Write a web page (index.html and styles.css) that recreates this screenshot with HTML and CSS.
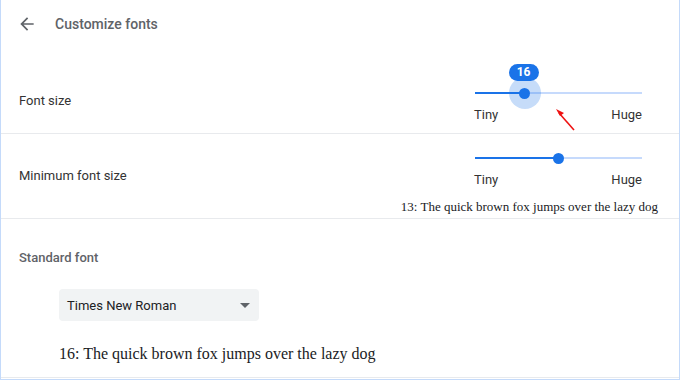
FILE: index.html
```html
<!DOCTYPE html>
<html>
<head>
<meta charset="utf-8">
<link rel="stylesheet" href="styles.css">
</head>
<body>
<div class="frame">
  <header class="header">
    <svg class="back" viewBox="0 0 24 24" width="20" height="20"><path d="M20 11H7.83l5.59-5.59L12 4l-8 8 8 8 1.41-1.41L7.83 13H20v-2z" fill="#5f6368"/></svg>
    <span class="title">Customize fonts</span>
  </header>

  <div class="row row-size">
    <div class="label label-size">Font size</div>
    <div class="control">
      <div class="slider-block">
        <div class="slider">
          <div class="track"></div>
          <div class="track-active" style="width:29%"></div>
          <div class="halo" style="left:28.9%"></div>
          <div class="knob" style="left:28.9%"></div>
          <div class="badge" style="left:28.9%">16</div>
        </div>
        <div class="ends"><span>Tiny</span><span>Huge</span></div>
      </div>
    </div>
  </div>

  <div class="row row-min">
    <div class="label label-min">Minimum font size</div>
    <div class="control">
      <div class="slider-block">
        <div class="slider">
          <div class="track"></div>
          <div class="track-active" style="width:50%"></div>
          <div class="knob" style="left:49.7%"></div>
        </div>
        <div class="ends"><span>Tiny</span><span>Huge</span></div>
      </div>
      <div class="sample-small">13: The quick brown fox jumps over the lazy dog</div>
    </div>
  </div>

  <section class="standard">
    <div class="section-title">Standard font</div>
    <div class="select">
      <span>Times New Roman</span>
      <span class="caret"></span>
    </div>
    <div class="sample-large">16: The quick brown fox jumps over the lazy dog</div>
  </section>

  <svg class="annot" width="30" height="30" viewBox="0 0 30 30">
    <line x1="23" y1="26" x2="8" y2="9" stroke="#ee1111" stroke-width="1.6"/>
    <polygon points="5,5 13,9 9,12" fill="#ee1111"/>
  </svg>
</div>
</body>
</html>
```

FILE: styles.css
```css
* { box-sizing: border-box; }
html, body { margin: 0; padding: 0; background: #fff; }
body { font-family: Roboto, "Liberation Sans", sans-serif; font-size: 13px; color: #333; }

.frame {
  position: relative;
  width: 680px;
  height: 380px;
  border-left: 1px solid #c4dafa;
  border-right: 1px solid #c4dafa;
  border-bottom: 1px solid #c4dafa;
  overflow: hidden;
}

.header {
  height: 48px;
  display: flex;
  align-items: center;
  padding-left: 16px;
}
.back { display: block; }
.title {
  margin-left: 18px;
  font-weight: 500;
  color: #5f6368;
  font-size: 14px;
}

.row {
  display: flex;
  justify-content: space-between;
  padding: 0 20px 0 18px;
  border-bottom: 1px solid #e8eaed;
}
.label { line-height: 16px; color: #333; }
.row-size { padding-top: 33px; padding-bottom: 10px; height: 86px; }
.label-size { margin-top: 12px; }
.row-min { padding-top: 12px; padding-bottom: 3px; height: 85px; }
.label-min { margin-top: 22px; }

.control {
  display: flex;
  flex-direction: column;
  align-items: flex-end;
}
.slider-block { width: 168px; margin-right: 17px; }
.slider { position: relative; height: 24px; }
.track, .track-active {
  position: absolute;
  left: 1px;
  top: 11px;
  height: 2px;
}
.track { right: 0; background: #c6dafc; }
.track-active { background: #1a73e8; }
.knob {
  position: absolute;
  top: 7px;
  width: 11px;
  height: 11px;
  margin-left: -4px;
  border-radius: 50%;
  background: #1a73e8;
}
.halo {
  position: absolute;
  top: -4px;
  width: 32px;
  height: 32px;
  margin-left: -14px;
  border-radius: 50%;
  background: rgba(26, 115, 232, 0.25);
}
.badge {
  position: absolute;
  top: -17px;
  width: 30px;
  height: 17px;
  margin-left: -14px;
  border-radius: 9px;
  background: #1a73e8;
  color: #fff;
  font-weight: 700;
  font-size: 12px;
  line-height: 17px;
  text-align: center;
}
.ends {
  display: flex;
  justify-content: space-between;
  margin-top: 2px;
  line-height: 16px;
  color: #333;
}
.sample-small {
  margin-top: 11px;
  margin-right: 1px;
  font-family: "Liberation Serif", serif;
  font-size: 13px;
  line-height: 16px;
  color: #202124;
}

.standard {
  padding: 31px 18px 13px 18px;
  border-bottom: 1px solid #e8eaed;
}
.section-title {
  font-weight: 500;
  color: #5f6368;
  line-height: 16px;
}
.select {
  margin: 23px 0 0 40px;
  width: 200px;
  height: 32px;
  background: #f1f3f4;
  border-radius: 4px;
  display: flex;
  align-items: center;
  justify-content: space-between;
  padding: 0 9px 0 8px;
  color: #202124;
}
.caret {
  width: 0;
  height: 0;
  border-left: 5px solid transparent;
  border-right: 5px solid transparent;
  border-top: 5px solid #5f6368;
}
.sample-large {
  margin: 23px 0 0 40px;
  font-family: "Liberation Serif", serif;
  font-size: 16px;
  line-height: 20px;
  color: #202124;
}

.annot {
  position: absolute;
  left: 550px;
  top: 104px;
}
```
